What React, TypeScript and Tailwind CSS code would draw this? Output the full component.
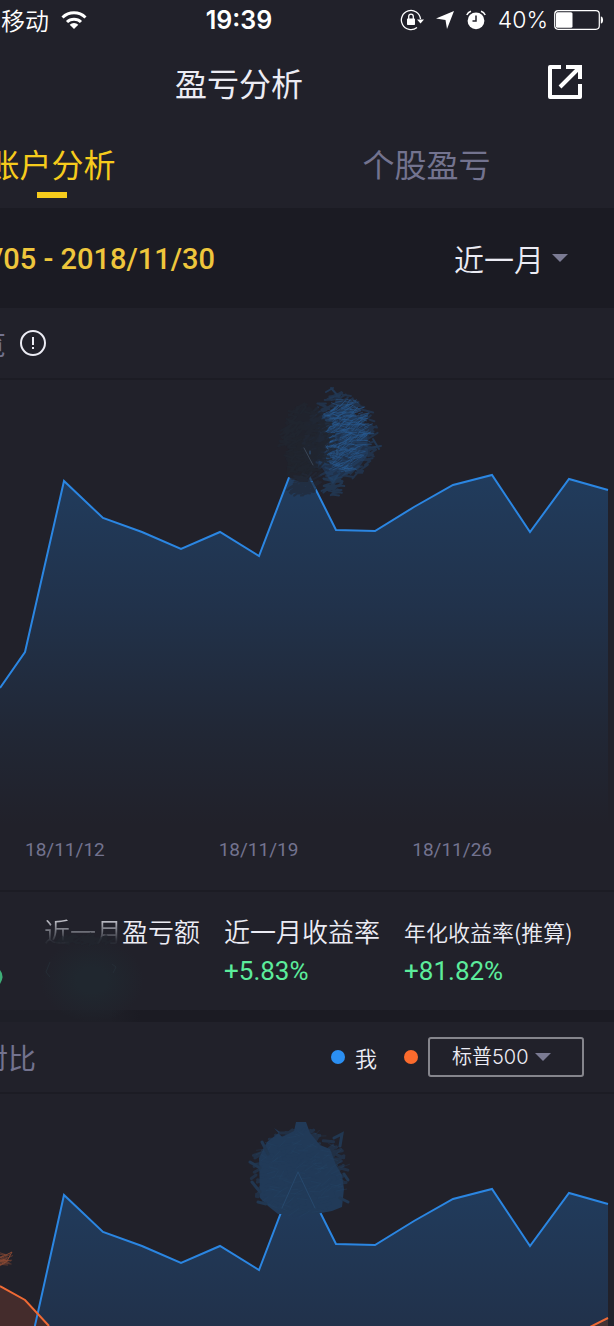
import { useId, useState } from "react";
import type { ReactNode } from "react";

type Point = [number, number];

const ACCOUNT: Point[] = [
  [0, 308], [25, 272], [64, 101], [103, 138], [142, 152], [181, 169], [220, 152], [259, 176],
  [298, 74], [336, 150], [375, 151], [414, 127], [453, 105], [492, 95], [530, 152], [569, 99], [608, 110],
];

// The comparison chart has a taller first rise, so only the start differs
const COMPARE: Point[] = [[34, 236], ...ACCOUNT.slice(2)];

const DATES = ["18/11/12", "18/11/19", "18/11/26"];

const toPath = (points: Point[]) => "M" + points.map(([x, y]) => `${x} ${y}`).join("L");

const toArea = (points: Point[], bottom: number) =>
  `${toPath(points)}V${bottom}H${points[0][0]}Z`;

// Rough brush strokes around a centre, always the same for the same seed
const scribble = (cx: number, cy: number, rx: number, ry: number, count: number, seed: number) => {
  let s = seed;
  const rand = () => {
    s = (s * 16807) % 2147483647;
    return s / 2147483647;
  };
  let d = "";
  for (let i = 0; i < count; i++) {
    const a = rand() * Math.PI * 2;
    const r = Math.sqrt(rand());
    const x = cx + Math.cos(a) * rx * r;
    const y = cy + Math.sin(a) * ry * r;
    const dx = 4 + rand() * 7;
    const dy = (rand() - 0.7) * 11;
    d += `M${(x - dx / 2).toFixed(1)} ${(y - dy / 2).toFixed(1)}l${dx.toFixed(1)} ${dy.toFixed(1)}`;
  }
  return d;
};

const Caret = () => (
  <svg viewBox="0 0 16 8" className="pointer-events-none h-2 w-4 shrink-0" fill="#7b7b93" aria-hidden="true">
    <path d="M0 0h16L8 8z" />
  </svg>
);

const StatusBar = () => (
  <div className="-ml-[136px] grid h-10 grid-cols-[1fr_auto_1fr] items-center text-white">
    <div className="flex items-center gap-3 pl-[137px] text-2xl font-[350]">
      <span>移动</span>
      <svg viewBox="0 0 26 20" className="h-5 w-[26px]" fill="none" stroke="white" strokeWidth="3" aria-hidden="true">
        <path d="M1.5 7.5a16.5 16.5 0 0 1 23 0" />
        <path d="M6 12a10 10 0 0 1 14 0" />
        <path d="M8.7 14.8a6.2 6.2 0 0 1 8.6 0L13 19z" fill="white" stroke="none" />
      </svg>
    </div>
    <span className="font-['Inter'] text-[25px] leading-10 font-semibold">19:39</span>
    <div className="flex items-center justify-end pr-[10px]">
      <svg viewBox="0 0 24 22" className="mr-3 h-[22px] w-6" fill="none" stroke="white" strokeWidth="1.3" aria-hidden="true">
        <path d="M20.5 10A9.6 9.6 0 1 0 17 18.5" />
        <path d="M17 10.5h7l-3.5 4z" fill="white" stroke="none" />
        <rect x="7" y="9.5" width="8" height="6.5" rx="0.7" fill="white" stroke="none" />
        <path d="M8.7 10V7.5a2.3 2.3 0 0 1 4.6 0V10" />
      </svg>
      <svg viewBox="0 0 18 18" className="mr-3 h-[18px] w-[18px]" fill="white" aria-hidden="true">
        <path d="M18 0L11 18L9.5 9L0 7.5z" />
      </svg>
      <svg viewBox="0 0 20 20" className="mr-3 h-5 w-5" fill="none" stroke="white" strokeWidth="1.5" aria-hidden="true">
        <circle cx="10" cy="10.8" r="8.4" fill="white" stroke="none" />
        <path d="M0.8 5A7 7 0 0 1 5 1.2M19.2 5A7 7 0 0 0 15 1.2" />
        <path d="M10 5.5V11H6.5" stroke="#21212a" />
      </svg>
      <span className="mr-[6px] font-['Inter'] text-[23px] font-light">40%</span>
      <svg viewBox="0 0 50 20" className="h-5 w-[50px]" aria-hidden="true">
        <rect x="0.7" y="0.7" width="44.6" height="18.6" rx="3.5" fill="none" stroke="white" strokeWidth="1.2" />
        <rect x="2" y="2.2" width="16.5" height="15.6" rx="1.5" fill="white" />
        <path d="M46.8 6.5c3 0 3 7 0 7z" fill="white" />
      </svg>
    </div>
  </div>
);

const Tab = ({ active, onClick, children }: { active: boolean; onClick: () => void; children: ReactNode }) => (
  <button
    type="button"
    role="tab"
    aria-selected={active}
    onClick={onClick}
    className={`flex h-full flex-1 flex-col items-center gap-1 pt-[14px] text-[32px] leading-[50px] ${
      active ? "text-[#f6cb1c]" : "text-[#73738f]"
    }`}
  >
    {children}
    {active && <span className="h-[6px] w-[30px] bg-[#f6cb1c]" />}
  </button>
);

const AccountChart = () => {
  const id = useId();
  return (
    <svg viewBox="0 0 614 450" className="block w-full" role="img" aria-label="账户分析">
      <defs>
        <linearGradient id={id} gradientUnits="userSpaceOnUse" x1="0" y1="80" x2="0" y2="445">
          <stop offset="0" stopColor="#213d5f" />
          <stop offset="0.4" stopColor="#21324b" />
          <stop offset="0.75" stopColor="#212735" />
          <stop offset="1" stopColor="#21212a" />
        </linearGradient>
      </defs>
      <path d={toArea(ACCOUNT, 450)} fill={`url(#${id})`} />
      <path d={toPath(ACCOUNT)} fill="none" stroke="#2b86e2" strokeWidth="2" />
      <path d="M290 58l20 -4l4 32l-6 16l-8 0l-14 -6z" fill="#21232c" />
      <g fill="none" strokeLinecap="round">
        <path d="M320 36l29 -12l18 30l1 20l-9 14l-28 14l-14 -22z" fill="#213652" opacity="0.8" />
        <path d={scribble(340, 57, 35, 43, 300, 17)} stroke="#22436a" strokeWidth="2" opacity="0.5" />
        <path d={scribble(346, 55, 24, 37, 260, 71)} stroke="#275c93" strokeWidth="1" opacity="0.5" />
        <path d={scribble(334, 106, 8, 10, 35, 9)} stroke="#214268" strokeWidth="2" opacity="0.6" />
        <path d={scribble(306, 60, 18, 32, 200, 39)} stroke="#21242e" strokeWidth="4" opacity="0.8" />
        <path d={scribble(308, 62, 26, 38, 130, 57)} stroke="#21252f" strokeWidth="2" opacity="0.8" />
        <path d={scribble(304, 104, 13, 10, 60, 51)} stroke="#222a38" strokeWidth="2" opacity="0.7" />
        <path d="M304 68l9 17" stroke="#3a4656" strokeWidth="1" />
        <path d="M310 71v3M326 66l2 3M337 69v6" stroke="#2d557f" strokeWidth="1" />
        <path d="M326 12l7 -4m-3 10l10 -3m-9 -7l8 9M368 68l13 -2m-8 -7l6 10" stroke="#213753" strokeWidth="2" />
      </g>
    </svg>
  );
};

const CompareChart = () => {
  const id = useId();
  return (
    <svg viewBox="0 0 614 232" className="block w-full" role="img" aria-label="对比">
      <defs>
        <linearGradient id={id} x1="0" y1="0" x2="0" y2="1">
          <stop offset="0" stopColor="#213d5f" />
          <stop offset="1" stopColor="#21314a" />
        </linearGradient>
      </defs>
      <path d={toArea(COMPARE, 236)} fill={`url(#${id})`} />
      <path d="M0 192L25 206L49 232H0z" fill="#442c2c" />
      <path d="M592 232l16 -6v6z" fill="#443334" />
      <path d={toPath(COMPARE)} fill="none" stroke="#2b86e2" strokeWidth="2" />
      <path d="M0 192L25 206L49 232M590 233l18 -9" fill="none" stroke="#ef6a35" strokeWidth="2" />
      <path
        d="M274 34l8 9l12 -6l2 -9h10l4 11l10 12l10 4l6 16l6 10l2 14l-2 18l-10 4l-16 3H278l-10 -8l-8 -8l-1 -40l8 -16l9 -7l4 -3z"
        fill="#213a58"
      />
      <g fill="none" strokeLinecap="round">
        <path d={scribble(299, 78, 46, 42, 260, 23)} stroke="#213a58" strokeWidth="3" opacity="0.6" />
        <path d={scribble(299, 78, 47, 43, 100, 88)} stroke="#264666" strokeWidth="1" opacity="0.3" />
        <path d="M334 44l8 -4l-2 12M262 48l6 12M250 68l10 6M252 88l8 10M258 108l8 2M340 104l8 4M344 80l4 6" stroke="#213751" strokeWidth="3" />
        <path d="M282 114L298 78L315 114" stroke="#27496d" strokeWidth="1" />
        <path d={scribble(3, 164, 6, 7, 22, 5)} stroke="#8b4a33" strokeWidth="1" opacity="0.6" />
        <path d="M0 164l12 -6l-5 9l-7 4" stroke="#8b4a33" strokeWidth="1" />
      </g>
    </svg>
  );
};

export default function App() {
  const [tab, setTab] = useState("account");

  return (
    <div className="min-h-screen overflow-hidden bg-[#21212a] font-['Noto_Sans_CJK_SC',sans-serif] text-[#ececf4]">
      <StatusBar />

      <header className="-ml-[136px] grid h-[84px] grid-cols-[1fr_auto_1fr] items-center">
        <h1 className="col-start-2 text-[32px] font-normal">盈亏分析</h1>
        <button type="button" aria-label="分享" className="mr-8 justify-self-end">
          <svg viewBox="0 0 34 34" className="h-[34px] w-[34px]" fill="none" stroke="white" strokeWidth="4" aria-hidden="true">
            <path d="M13 2H2V32H32V19" strokeLinejoin="round" />
            <path d="M18 2H32V14M32 2L12 22" />
          </svg>
        </button>
      </header>

      <div role="tablist" className="-ml-[136px] flex h-[84px]">
        <Tab active={tab === "account"} onClick={() => setTab("account")}>账户分析</Tab>
        <Tab active={tab === "stock"} onClick={() => setTab("stock")}>个股盈亏</Tab>
      </div>

      <div className="flex h-[100px] items-center justify-between bg-[#1b1b23] pr-[46px]">
        <span className="-ml-2 pt-1 font-['Roboto'] text-[29px] font-medium text-[#eec63c]">/05 - 2018/11/30</span>
        <label className="flex items-center">
          <select aria-label="时间范围" className="-mr-4 appearance-none bg-transparent pr-6 text-[30px] font-[350] outline-none">
            <option>近一月</option>
          </select>
          <Caret />
        </label>
      </div>

      <section>
        <div className="flex h-[72px] items-center gap-[14px] border-b-2 border-[#1c1c24]">
          <h2 className="-ml-[22px] text-[28px] text-[#73738f]">览</h2>
          <button type="button" aria-label="说明">
            <svg viewBox="0 0 26 26" className="h-[26px] w-[26px]" fill="none" stroke="#ececf4" strokeWidth="2" aria-hidden="true">
              <circle cx="13" cy="13" r="12" />
              <path d="M13 7v8M13 17v2" />
            </svg>
          </button>
        </div>
        <AccountChart />
        <div className="flex h-[62px] justify-between border-b-2 border-[#1c1c24] pr-[122px] pl-[25px] font-['Roboto'] text-[19px] leading-10 text-[#73738f]">
          {DATES.map((date) => (
            <span key={date}>{date}</span>
          ))}
        </div>
      </section>

      <section className="relative">
        <dl className="flex h-[118px] gap-6 pt-[19px] pl-[44px] whitespace-nowrap">
          <div>
            <dt className="text-[26px] leading-10 font-[350]">
              <span className="bg-linear-to-b from-[#c8c8d0] from-20% to-[#292b34] to-80% bg-clip-text text-transparent">近一月</span>
              盈亏额
            </dt>
          </div>
          <div>
            <dt className="text-[26px] leading-10 font-[350]">近一月收益率</dt>
            <dd className="font-['Roboto'] text-[26px] leading-10 text-[#5cec9c]">+5.83%</dd>
          </div>
          <div>
            <dt className="text-[22px] leading-10 font-[350]">年化收益率(推算)</dt>
            <dd className="font-['Roboto'] text-[26px] leading-10 text-[#5cec9c]">+81.82%</dd>
          </div>
        </dl>
        <div className="h-3 bg-linear-to-r from-[#1e1f27] from-[110px] to-[#1b1b23] to-[140px]" />
        {/* smudge over the hidden amount */}
        <svg viewBox="0 0 150 110" className="absolute bottom-0 left-0 h-[110px] w-[150px]" aria-hidden="true">
          <defs>
            <radialGradient id="smudge">
              <stop offset="0.3" stopColor="#20272f" />
              <stop offset="1" stopColor="#20272f" stopOpacity="0" />
            </radialGradient>
          </defs>
          <ellipse cx="92" cy="68" rx="52" ry="42" fill="url(#smudge)" />
          <path d={scribble(84, 28, 28, 4, 50, 31)} stroke="#21262f" strokeWidth="2" opacity="0.6" fill="none" />
          <path d="M50 50l-4 10l4 5M112 52l4 3l-3 6" stroke="#252d36" strokeWidth="1" fill="none" />
          <path d="M0 58q5 6 0 14z" fill="#3eae78" />
        </svg>
      </section>

      <section>
        <div className="flex h-[72px] items-center border-b-2 border-[#1c1c24] pr-[30px]">
          <h2 className="mr-auto -ml-5 text-[28px] text-[#73738f]">对比</h2>
          <span className="mr-[10px] h-[14px] w-[14px] rounded-full bg-[#2b8ff2]" />
          <span className="mr-[27px] text-[22px] font-[350]">我</span>
          <span className="mr-[10px] h-[14px] w-[14px] rounded-full bg-[#fb6b2d]" />
          <label className="flex h-10 w-[156px] items-center rounded-[3px] border-2 border-[#85858c] pl-[22px]">
            <select
              aria-label="对比指数"
              className="-mr-4 appearance-none bg-transparent pr-[22px] font-['Inter','Noto_Sans_CJK_SC',sans-serif] text-[20px] font-[350] outline-none"
            >
              <option>标普500</option>
            </select>
            <Caret />
          </label>
        </div>
        <CompareChart />
      </section>
    </div>
  );
}
